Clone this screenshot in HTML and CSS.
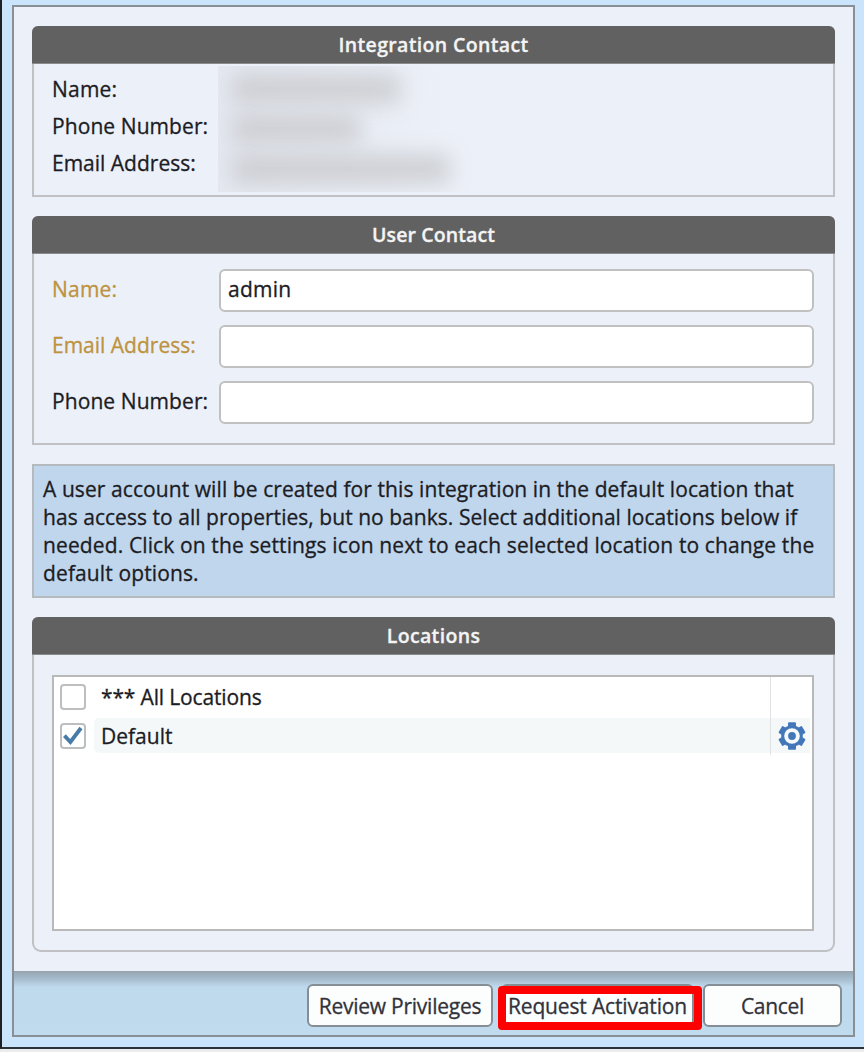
FILE: index.html
```html
<!DOCTYPE html>
<html lang="en">
<head>
<meta charset="utf-8">
<title>Integration Activation</title>
<link rel="stylesheet" href="styles.css">
</head>
<body>
<div class="window">
  <main class="dialog">
    <div class="content">
      <section class="panel panel-integration">
        <h2 class="panel-title"><span class="t-integration">Integration Contact</span></h2>
        <div class="info">
          <div class="info-labels">
            <span class="t-name">Name:</span>
            <span class="t-phone">Phone Number:</span>
            <span class="t-email">Email Address:</span>
          </div>
          <div class="redacted">
            <div class="smudge smudge-name"></div>
            <div class="smudge smudge-phone"></div>
            <div class="smudge smudge-email"></div>
          </div>
        </div>
      </section>

      <section class="panel panel-user">
        <h2 class="panel-title"><span class="t-user">User Contact</span></h2>
        <div class="fields">
          <label class="field required"><span class="field-label t-name">Name:</span><span class="input"><span class="t-admin">admin</span></span></label>
          <label class="field required"><span class="field-label t-email">Email Address:</span><span class="input"></span></label>
          <label class="field"><span class="field-label t-phone">Phone Number:</span><span class="input"></span></label>
        </div>
      </section>

      <div class="notice">
        <span class="line l1">A user account will be created for this integration in the default location that</span>
        <span class="line l2">has access to all properties, but no banks. Select additional locations below if</span>
        <span class="line l3">needed. Click on the settings icon next to each selected location to change the</span>
        <span class="line l4">default options.</span>
      </div>

      <section class="panel panel-locations">
        <h2 class="panel-title"><span class="t-locations">Locations</span></h2>
        <div class="list">
          <div class="row">
            <span class="checkbox"></span>
            <span class="row-name"><span class="t-all">*** All Locations</span></span>
            <span class="row-action"></span>
          </div>
          <div class="row selected">
            <span class="checkbox"><svg width="22" height="22" viewBox="0 0 22 22"><path d="M2.4 10.6 L8.4 17 L19 3" fill="none" stroke="#487ba7" stroke-width="3.8"/></svg></span>
            <span class="row-name"><span class="t-default">Default</span></span>
            <span class="row-action"><svg class="gear" width="28" height="28" viewBox="-14 -14 28 28"><g fill="#4477b9"><rect x="-4" y="-13.8" width="8" height="27.6" rx="1"/><rect x="-4" y="-13.5" width="8" height="27" rx="1" transform="rotate(60)"/><rect x="-4" y="-13.5" width="8" height="27" rx="1" transform="rotate(120)"/><circle r="10.8"/></g><circle r="7.8" fill="#f6f9fa"/><circle r="3.9" fill="#4477b9"/></svg></span>
          </div>
        </div>
      </section>
    </div>

    <footer class="footer">
      <button class="button b-review"><span class="t-review">Review Privileges</span></button>
      <button class="button b-request"><span class="t-request">Request Activation</span></button>
      <button class="button b-cancel"><span class="t-cancel">Cancel</span></button>
      <div class="highlight"></div>
    </footer>
  </main>
</div>
</body>
</html>
```
FILE: styles.css
```css
* { box-sizing: border-box; }

body {
  margin: 0;
  width: 864px;
  height: 1052px;
  overflow: hidden;
  background: #ececec;
  color: #1c1c24;
  font-family: "Open Sans", "Noto Sans", sans-serif;
  font-size: 21px;
  line-height: 28px;
  -webkit-text-stroke: 0.3px currentColor;
}

span { white-space: nowrap; }

.window {
  height: 1049px;
  padding: 5px 9px 10px 10px;
  background: #c9e4fb;
  border-left: 2px solid #1e2024;
  border-bottom: 2px solid #2b3238;
}

.dialog {
  display: flex;
  flex-direction: column;
  height: 1032px;
  background: #ecf0f8;
  border: 2px solid #8a8f95;
}

.content {
  display: flex;
  flex-direction: column;
  height: 964px;
  padding: 19px 18px 0;
}

.panel { border: 2px solid #c0c1c4; border-top: 0; border-radius: 6px 6px 0 0; }
.panel-integration { height: 171px; margin-bottom: 19px; }
.panel-user { height: 229px; margin-bottom: 19px; }
.panel-locations { height: 335px; border-radius: 6px 6px 9px 9px; }

.panel-title {
  display: flex;
  align-items: center;
  justify-content: center;
  height: 38px;
  margin: 0 -2px;
  border-radius: 6px 6px 0 0;
  background: #616161;
  border-bottom: 1px solid #8b8b8b;
  color: #f4f4f4;
  font-size: 19.5px;
  font-weight: 600;
}

.info { display: flex; }

.info-labels {
  display: flex;
  flex-direction: column;
  gap: 9px;
  width: 184px;
  padding: 11px 0 0 18px;
}

.redacted {
  display: flex;
  flex-direction: column;
  width: 290px;
  height: 126px;
  margin-top: 2px;
  padding: 9px 14px;
  gap: 12px;
  overflow: hidden;
  background: linear-gradient(90deg, #e5e8f1, #e8ecf4 45%, #ecf0f8 80%);
}

.smudge { height: 28px; background: #c8c9cc; opacity: 0.85; filter: blur(11px); flex: none; }
.smudge-name { width: 168px; }
.smudge-phone { width: 128px; }
.smudge-email { width: 218px; }

.fields {
  display: flex;
  flex-direction: column;
  gap: 13px;
  padding: 15px 19px 0 18px;
}

.field { display: flex; align-items: center; height: 43px; }
.field-label { flex: none; width: 167px; padding-bottom: 3px; }
.required { color: #bd9340; }

.input {
  display: flex;
  align-items: center;
  flex: 1;
  height: 43px;
  padding: 0 0 3px 7px;
  background: #fff;
  border: 2px solid #c0c0c1;
  border-radius: 6px;
  color: #1c1c24;
}

.notice {
  height: 134px;
  margin-bottom: 19px;
  padding: 9px 9px;
  background: #bfd6ed;
  border: 2px solid #b5babf;
}

.line { display: block; }

.list {
  height: 256px;
  margin: 20px 19px 0 18px;
  padding: 0 2px 0 6px;
  background: #fff;
  border: 2px solid #b9b9ba;
}

.row { display: flex; align-items: center; height: 39px; }

.checkbox {
  display: flex;
  align-items: center;
  justify-content: center;
  width: 26px;
  height: 26px;
  margin-right: 8px;
  background: #fff;
  border: 2px solid #bdbec0;
  border-radius: 4px;
}

.row-name {
  display: flex;
  align-items: center;
  flex: 1;
  height: 35px;
  padding: 1px 0 0 7px;
}

.row-action {
  display: flex;
  align-items: center;
  justify-content: center;
  width: 40px;
  height: 39px;
  padding-left: 2px;
  border-left: 1px solid #e2e2e4;
}

.selected .row-name { background: #f4f8f9; border-radius: 5px 0 0 5px; }
.selected .row-action { background: linear-gradient(#fff 2px, #f4f8f9 2px, #f4f8f9 37px, #fff 37px); }

.footer {
  position: relative;
  display: flex;
  flex: 1;
  padding: 13px 11px 0 0;
  justify-content: flex-end;
  background: linear-gradient(#9aa0a6 0, #9aabb9 2px, #a4b9ca 7px, #bfd9ed 16px, #c0daee);
}

.button {
  display: flex;
  align-items: center;
  justify-content: center;
  height: 43px;
  padding: 1px 0 0;
  background: #fcfefe;
  border: 2px solid #858d95;
  border-radius: 6px;
  color: #32323a;
  font: inherit;
  font-size: 21px;
}

.b-review { width: 186px; margin-right: 8px; }
.b-request { width: 193px; margin-right: 9px; }
.b-cancel { width: 139px; }

.highlight {
  position: absolute;
  left: 484px;
  top: 15px;
  width: 204px;
  height: 44px;
  border: 8px solid #fe0000;
  border-radius: 4px;
}

.t-name { letter-spacing: 0.2px; }
.t-phone { letter-spacing: 0.08px; }
.t-email { letter-spacing: 0; }
.t-admin { letter-spacing: 0.25px; }
.t-all { letter-spacing: -0.15px; }
.t-default { letter-spacing: 0; }
.l1 { letter-spacing: 0.08px; }
.l2 { letter-spacing: 0.04px; }
.l3, .l4 { letter-spacing: 0.12px; }
.t-review { letter-spacing: -0.25px; }
.t-request { letter-spacing: -0.15px; }
.t-cancel { letter-spacing: -0.3px; }
.t-integration { letter-spacing: 0.35px; }
.t-user { letter-spacing: 0.1px; }
.t-locations { letter-spacing: 0.35px; }
```
